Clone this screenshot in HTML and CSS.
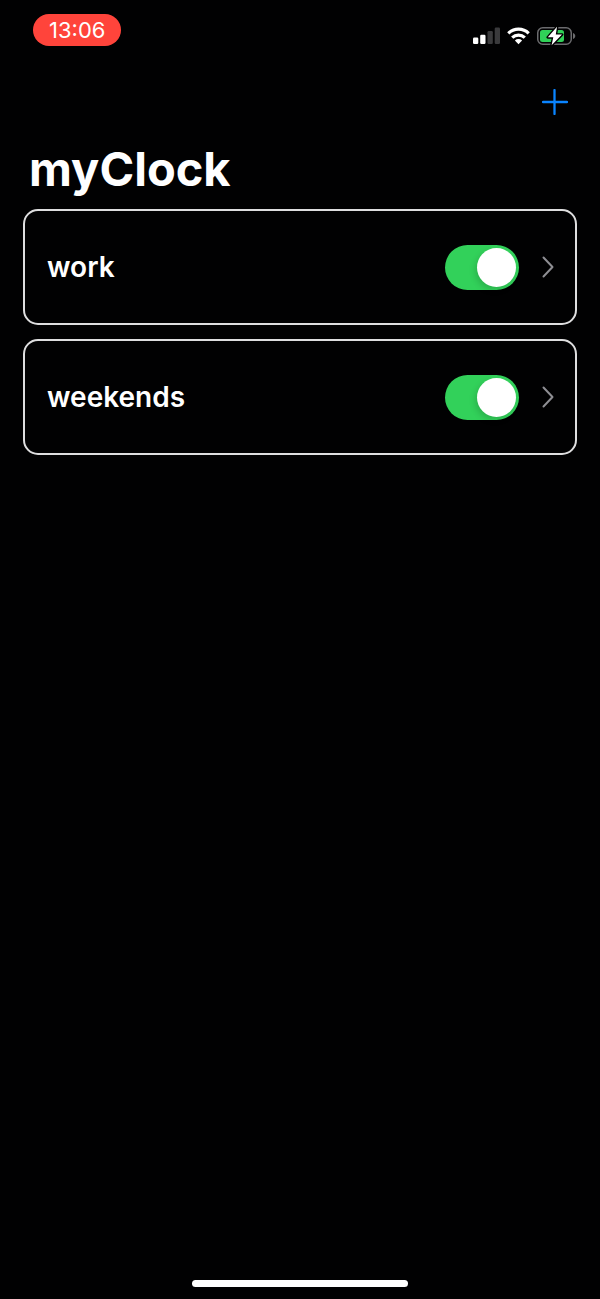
FILE: index.html
```html
<!DOCTYPE html>
<html lang="en">
<head>
<meta charset="utf-8">
<meta name="viewport" content="width=device-width, initial-scale=1">
<title>myClock</title>
<link rel="stylesheet" href="styles.css">
</head>
<body>
<div class="screen">
  <header class="status">
    <time class="clock">13:06</time>
    <div class="indicators">
      <svg width="27" height="18" viewBox="0 0 27 18" role="img" aria-label="Signal">
        <rect x="0" y="10.500" width="5.300" height="6.500" rx="1.200" fill="#fff"/>
        <rect x="7.200" y="7.700" width="5.300" height="9.300" rx="1.200" fill="#fff"/>
        <rect x="14.500" y="4" width="5.300" height="13" rx="1.200" fill="#3a3a3c"/>
        <rect x="21.700" y="0.500" width="5.300" height="16.500" rx="1.200" fill="#3a3a3c"/>
      </svg>
      <svg width="23" height="18" viewBox="0 0 23 18" role="img" aria-label="Wi-Fi">
        <g fill="none" stroke="#fff" stroke-width="3.200">
          <path d="M1.300 6.300a14.500 14.500 0 0 1 20.400 0"/>
          <path d="M5.200 10.600a9 9 0 0 1 12.600 0"/>
        </g>
        <path d="M11.500 17.200L7.900 13.600a5.100 5.100 0 0 1 7.200 0z" fill="#fff"/>
      </svg>
      <svg width="39" height="20" viewBox="0 0 39 20" role="img" aria-label="Battery charging">
        <rect x="0.750" y="1.750" width="33.500" height="16.500" rx="5" fill="none" stroke="#6b6b6e" stroke-width="1.500"/>
        <path d="M36 7c3 1 3 5 0 6z" fill="#6b6b6e"/>
        <rect x="3" y="4" width="24" height="12" rx="2.500" fill="#30d158"/>
        <path d="M20 0.800L10.800 11.300h5.500L14.600 19.200 25 8.600h-6.200z" fill="#fff" stroke="#000" stroke-width="2.800" stroke-linejoin="round" paint-order="stroke"/>
      </svg>
    </div>
  </header>
  <nav class="toolbar">
    <button class="add" type="button" aria-label="Add">
      <svg width="26" height="26" viewBox="0 0 26 26" aria-hidden="true"><path d="M12.500 1v24M1 13h24" fill="none" stroke="#0a84ff" stroke-width="2.300" stroke-linecap="round"/></svg>
    </button>
  </nav>
  <main class="content">
    <h1 class="title">myClock</h1>
    <ul class="cards">
      <li class="card">
        <label class="name" for="work">work</label>
        <input class="toggle" id="work" type="checkbox" role="switch" checked>
        <button class="more" type="button" aria-label="Open work">
          <svg width="12" height="22" viewBox="0 0 12 22" aria-hidden="true"><path d="M1.500 1.500L10.500 11l-9 9.500" fill="none" stroke="#8e8e93" stroke-width="2" stroke-linecap="round" stroke-linejoin="round"/></svg>
        </button>
      </li>
      <li class="card">
        <label class="name" for="weekends">weekends</label>
        <input class="toggle" id="weekends" type="checkbox" role="switch" checked>
        <button class="more" type="button" aria-label="Open weekends">
          <svg width="12" height="22" viewBox="0 0 12 22" aria-hidden="true"><path d="M1.500 1.500L10.500 11l-9 9.500" fill="none" stroke="#8e8e93" stroke-width="2" stroke-linecap="round" stroke-linejoin="round"/></svg>
        </button>
      </li>
    </ul>
  </main>
  <div class="home-bar"></div>
</div>
</body>
</html>
```
FILE: styles.css
```css
* {
  box-sizing: border-box;
}

body {
  margin: 0;
  background: #010102;
  color: #fff;
  font-family: Inter, "Liberation Sans", sans-serif;
}

button {
  display: flex;
  padding: 0;
  border: 0;
  background: none;
}

svg {
  display: block;
}

.screen {
  display: flex;
  flex-direction: column;
  min-height: 100vh;
  padding-bottom: 12px;
}

.status {
  display: flex;
  justify-content: space-between;
  align-items: flex-start;
  padding: 14px 24px 0 33px;
}

.clock {
  padding: 0 16px;
  border-radius: 16px;
  background: #ff443b;
  font-size: 22px;
  line-height: 32px;
}

.indicators {
  display: flex;
  align-items: center;
  gap: 7px;
  padding-top: 12px;
}

.toolbar {
  display: flex;
  justify-content: flex-end;
  padding: 43px 32px 0;
}

.content {
  flex: 1;
  padding: 24px 23px;
}

.title {
  margin: 0;
  padding: 0 6px;
  font-size: 47px;
  font-weight: 700;
  line-height: 60px;
}

.cards {
  display: flex;
  flex-direction: column;
  gap: 14px;
  margin: 10px 0 0;
  padding: 0;
  list-style: none;
}

.card {
  display: flex;
  align-items: center;
  gap: 23px;
  height: 116px;
  padding: 0 21px 0 22px;
  border: 2px solid #dededf;
  border-radius: 15px;
}

.name {
  flex: 1;
  font-size: 28px;
  font-weight: 600;
  line-height: 36px;
}

.toggle {
  appearance: none;
  display: flex;
  width: 74px;
  height: 45px;
  margin: 0;
  padding: 3px;
  border-radius: 23px;
  background: #39393d;
}

.toggle::before {
  content: "";
  width: 39px;
  height: 39px;
  border-radius: 50%;
  background: #fff;
  box-shadow: -2px 3px 6px rgba(0, 0, 0, 0.15);
}

.toggle:checked {
  justify-content: flex-end;
  background: #32d15a;
}

.home-bar {
  align-self: center;
  width: 36%;
  height: 7px;
  border-radius: 4px;
  background: #fff;
}
```
